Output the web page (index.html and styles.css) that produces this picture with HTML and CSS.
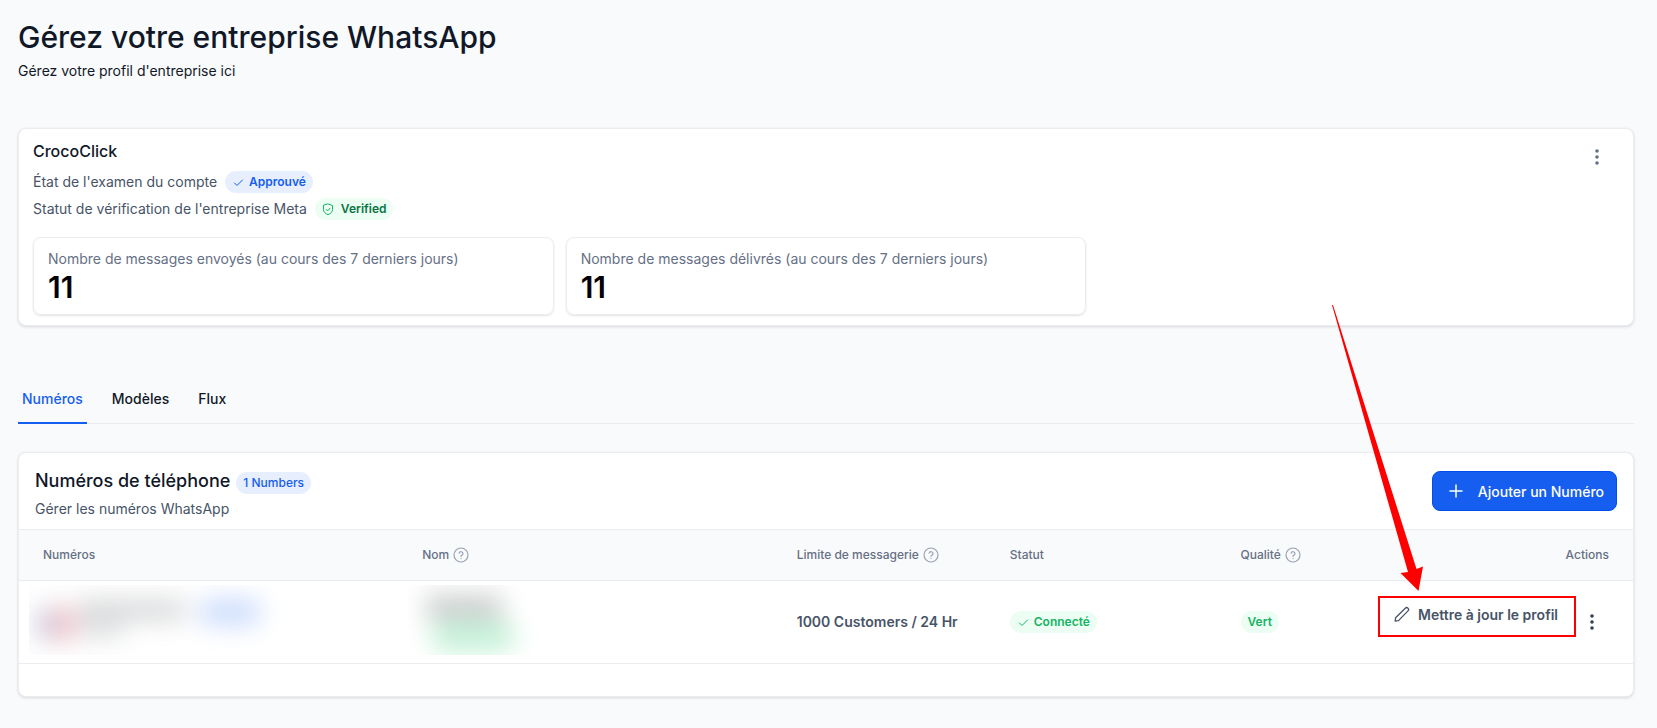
FILE: index.html
```html
<!DOCTYPE html>
<html lang="fr">
<head>
    <meta charset="UTF-8">
    <meta name="viewport" content="width=device-width, initial-scale=1">
    <title>Gérez votre entreprise WhatsApp</title>
    <link rel="stylesheet" href="styles.css">
</head>
<body>
<!-- Shared icons -->
<svg class="icon-defs" aria-hidden="true">
    <symbol id="icon-check" viewBox="0 0 12 12">
        <path d="M2.500 7 5 9.500 10.500 4"/>
    </symbol>
    <symbol id="icon-help" viewBox="0 0 16 16">
        <circle cx="8" cy="8" r="7"/>
        <path d="M6.1 6.1a2 2 0 0 1 3.9.6c0 1.3-2 1.6-2 2.6M8 11.4v.1"/>
    </symbol>
    <symbol id="icon-dots" viewBox="0 0 20 20">
        <circle cx="10" cy="4" r="1.800"/>
        <circle cx="10" cy="10" r="1.800"/>
        <circle cx="10" cy="16" r="1.800"/>
    </symbol>
</svg>

<main class="page">
    <header class="page-header">
        <h1 class="page-title">Gérez votre entreprise WhatsApp</h1>
        <p class="page-subtitle">Gérez votre profil d'entreprise ici</p>
    </header>

    <!-- Account card -->
    <section class="card account-card">
        <div class="account-top">
            <div class="account-info">
                <h2 class="account-name">CrocoClick</h2>
                <p class="account-line">État de l'examen du compte
                    <span class="badge badge-blue"><svg class="icon-check"><use href="#icon-check"/></svg>Approuvé</span>
                </p>
                <p class="account-line">Statut de vérification de l'entreprise Meta
                    <span class="badge badge-verified"><svg class="icon-shield" viewBox="0 0 12 14"><path d="M6 2 10.500 3.500v4c0 2.500-2 4.200-4.500 5.200C3.500 11.700 1.500 10 1.500 7.500v-4z"/><path d="m4.200 7.500 1.400 1.400 2.300-2.600"/></svg>Verified</span>
                </p>
            </div>
            <button class="icon-button" type="button" aria-label="Options du compte"><svg class="icon-dots"><use href="#icon-dots"/></svg></button>
        </div>
        <div class="stats">
            <div class="stat">
                <p class="stat-label">Nombre de messages envoyés (au cours des 7 derniers jours)</p>
                <p class="stat-value">11</p>
            </div>
            <div class="stat">
                <p class="stat-label">Nombre de messages délivrés (au cours des 7 derniers jours)</p>
                <p class="stat-value">11</p>
            </div>
        </div>
    </section>

    <!-- Tabs -->
    <nav class="tabs">
        <a class="tab active" href="#numeros">Numéros</a>
        <a class="tab" href="#modeles">Modèles</a>
        <a class="tab" href="#flux">Flux</a>
    </nav>

    <!-- Phone numbers card -->
    <section class="card" id="numeros">
        <div class="numbers-header">
            <div class="numbers-heading">
                <h2 class="numbers-title">Numéros de téléphone <span class="badge badge-blue badge-count">1 Numbers</span></h2>
                <p class="numbers-subtitle">Gérer les numéros WhatsApp</p>
            </div>
            <button class="add-button" type="button">
                <svg class="icon-plus" viewBox="0 0 14 14"><path d="M7 1v12M1 7h12"/></svg>
                Ajouter un Numéro
            </button>
        </div>
        <table class="numbers-table">
            <colgroup>
                <col class="col-number">
                <col class="col-name">
                <col class="col-limit">
                <col class="col-status">
                <col class="col-quality">
                <col class="col-actions">
            </colgroup>
            <thead>
                <tr>
                    <th>Numéros</th>
                    <th><span class="th-help">Nom <svg class="icon-help"><use href="#icon-help"/></svg></span></th>
                    <th><span class="th-help">Limite de messagerie <svg class="icon-help"><use href="#icon-help"/></svg></span></th>
                    <th>Statut</th>
                    <th><span class="th-help">Qualité <svg class="icon-help"><use href="#icon-help"/></svg></span></th>
                    <th class="th-actions">Actions</th>
                </tr>
            </thead>
            <tbody>
                <tr>
                    <td class="hidden-cell">
                        <div class="hidden-data">
                            <svg class="hidden-shapes" aria-hidden="true">
                                <rect x="8" y="23" width="16" height="32" fill="#b9bdd2"/>
                                <rect x="24" y="23" width="22" height="32" fill="#efb0ba"/>
                                <rect x="50" y="16" width="106" height="18" fill="#c4c6c8"/>
                                <rect x="50" y="38" width="44" height="14" fill="#cfd2d4"/>
                                <rect x="170" y="14" width="62" height="26" rx="12" fill="#bdd2fb"/>
                            </svg>
                        </div>
                    </td>
                    <td class="hidden-cell">
                        <div class="hidden-data">
                            <svg class="hidden-shapes" aria-hidden="true">
                                <rect x="18" y="11" width="76" height="22" fill="#b8babc"/>
                                <rect x="24" y="36" width="82" height="30" rx="12" fill="#b3edcb"/>
                            </svg>
                        </div>
                    </td>
                    <td class="limit">1000 Customers / 24 Hr</td>
                    <td><span class="badge badge-green"><svg class="icon-check"><use href="#icon-check"/></svg>Connecté</span></td>
                    <td><span class="badge badge-green">Vert</span></td>
                    <td class="td-actions">
                        <div class="actions">
                            <button class="profile-button" type="button">
                                <svg class="icon-pencil" viewBox="0 0 16 16"><path d="M1.200 15.200 1.600 11.800 11.300 2.200a1.900 1.900 0 0 1 2.700 2.700L4.500 14.600z"/></svg>
                                Mettre à jour le profil
                            </button>
                            <button class="icon-button icon-button-dark" type="button" aria-label="Options du numéro"><svg class="icon-dots"><use href="#icon-dots"/></svg></button>
                        </div>
                    </td>
                </tr>
            </tbody>
        </table>
    </section>

    <!-- Arrow pointing at the profile button -->
    <svg class="arrow" viewBox="0 0 92 286" aria-hidden="true">
        <path d="M0 0h1L84.500 264 91 261.500 86.500 286 68.500 268 76 267z"/>
    </svg>
</main>
</body>
</html>
```
FILE: styles.css
```css
/* Base */
* {
    box-sizing: border-box;
}

body {
    font-family: Inter, "Liberation Sans", sans-serif;
    font-size: 14px;
    line-height: 20px;
    color: #101828;
    background-color: #f9fafb;
    margin: 0;
}

h1, h2, p {
    margin: 0;
    font-weight: 500;
}

p {
    font-weight: 400;
}

button {
    font-family: inherit;
    cursor: pointer;
}

svg {
    fill: none;
    stroke: currentColor;
    stroke-linecap: round;
    stroke-linejoin: round;
    flex-shrink: 0;
}

.icon-defs {
    display: none;
}

.page {
    position: relative;
    padding: 18px 23px 30px 18px;
}

/* Page header */
.page-header {
    margin-bottom: 47px;
}

.page-title {
    font-size: 30px;
    line-height: 38px;
    margin-bottom: 5px;
}

/* Cards */
.card {
    background-color: #fff;
    border: 1px solid #eaecf0;
    border-radius: 8px;
    box-shadow: 0 1px 3px rgba(16, 24, 40, 0.15);
}

.account-card {
    padding: 10px 14px;
}

.account-top {
    display: flex;
    justify-content: space-between;
}

.account-name {
    font-size: 16px;
    line-height: 24px;
    margin-bottom: 8px;
}

.account-line {
    display: flex;
    align-items: center;
    gap: 8px;
    color: #475467;
    margin-bottom: 5px;
}

/* Badges */
.badge {
    display: inline-flex;
    align-items: center;
    gap: 5px;
    height: 22px;
    padding: 0 7px;
    border-radius: 11px;
    font-size: 12px;
    line-height: 18px;
    font-weight: 600;
}

.badge-blue {
    color: #155eef;
    background-color: #e7eefd;
}

.badge-count {
    margin-top: 3px;
    font-weight: 500;
}

.badge-verified {
    color: #087443;
    background-color: #ecfdf3;
    gap: 7px;
}

.badge-green {
    color: #16b364;
    background-color: #ecfdf3;
}

.icon-check {
    width: 12px;
    height: 12px;
}

.icon-shield {
    width: 12px;
    height: 14px;
    color: #16b364;
}

/* Icon buttons */
.icon-button {
    display: flex;
    align-items: center;
    justify-content: center;
    width: 32px;
    height: 32px;
    padding: 0;
    border: none;
    background: none;
    color: #667085;
}

.account-top .icon-button {
    margin: 2px 6px 0 0;
}

.icon-button-dark {
    color: #344054;
}

.icon-dots {
    width: 20px;
    height: 20px;
    fill: currentColor;
    stroke: none;
}

/* Stats */
.stats {
    display: grid;
    grid-template-columns: repeat(3, 1fr);
    gap: 12px;
    margin-top: 12px;
}

.stat {
    padding: 11px 14px 9px;
    border: 1px solid #eaecf0;
    border-radius: 8px;
    box-shadow: 0 1px 2px rgba(16, 24, 40, 0.12);
}

.stat-label {
    color: #667085;
}

.stat-value {
    font-size: 30px;
    line-height: 36px;
    font-weight: 600;
    color: #000;
}

/* Tabs */
.tabs {
    display: flex;
    gap: 21px;
    margin: 63px 0 28px;
    border-bottom: 1px solid #eaecf0;
}

.tab {
    padding: 0 4px 13px;
    margin-bottom: -1px;
    border-bottom: 2px solid transparent;
    color: #101828;
    font-weight: 500;
    text-decoration: none;
}

.tab.active {
    color: #155eef;
    border-color: #155eef;
}

/* Phone numbers header */
.numbers-header {
    display: flex;
    align-items: center;
    justify-content: space-between;
    padding: 12px 16px;
}

.numbers-heading {
    padding-top: 2px;
    margin-bottom: -2px;
}

.numbers-title {
    display: flex;
    align-items: center;
    gap: 6px;
    font-size: 18px;
    line-height: 28px;
    margin-bottom: 4px;
}

.numbers-subtitle {
    color: #475467;
}

.add-button {
    display: flex;
    align-items: center;
    gap: 15px;
    height: 40px;
    padding: 0 12px 0 16px;
    border: 1px solid #004eeb;
    border-radius: 8px;
    background-color: #155eef;
    color: #fff;
    font-size: 14px;
    font-weight: 500;
}

.icon-plus {
    width: 14px;
    height: 14px;
    stroke-width: 1.5;
}

/* Phone numbers table */
.numbers-table {
    width: 100%;
    margin-bottom: 32px;
    border-collapse: collapse;
    table-layout: fixed;
}

.col-number { width: 23.5%; }
.col-name { width: 23.2%; }
.col-limit { width: 13.2%; }
.col-status { width: 14.3%; }
.col-quality { width: 10%; }

.numbers-table th {
    height: 51px;
    padding: 0 24px;
    border-top: 1px solid #eaecf0;
    border-bottom: 1px solid #eaecf0;
    background-color: #f9fafb;
    color: #667085;
    font-size: 12px;
    font-weight: 500;
    text-align: left;
}

.numbers-table .th-actions {
    text-align: right;
}

.th-help {
    display: flex;
    align-items: center;
    gap: 4px;
}

.icon-help {
    width: 16px;
    height: 16px;
    color: #98a2b3;
    stroke-width: 1.2;
}

.numbers-table td {
    height: 83px;
    padding: 0 24px;
    border-bottom: 1px solid #eaecf0;
}

.numbers-table .limit {
    padding-right: 0;
    color: #475467;
    font-weight: 600;
    white-space: nowrap;
}

/* Blurred private data */
.numbers-table .hidden-cell {
    padding: 0 10px;
}

.hidden-data {
    height: 70px;
    margin-bottom: 4px;
    overflow: hidden;
}

.hidden-shapes {
    display: block;
    width: 100%;
    height: 70px;
    stroke: none;
    opacity: 0.8;
    filter: blur(13px);
}

/* Row actions */
.numbers-table .td-actions {
    padding: 0 25px 0 0;
}

.actions {
    display: flex;
    align-items: center;
    justify-content: flex-end;
}

.profile-button {
    display: flex;
    align-items: center;
    gap: 8px;
    height: 41px;
    margin-bottom: 12px;
    padding: 0 16px 4px 14px;
    border: 2px solid #f00;
    background: none;
    color: #475467;
    font-size: 14px;
    font-weight: 600;
    white-space: nowrap;
}

.icon-pencil {
    width: 16px;
    height: 16px;
    stroke-width: 1.3;
}

/* Arrow over the page */
.arrow {
    position: absolute;
    top: 305px;
    right: 233px;
    width: 92px;
    height: 286px;
    fill: #f00;
    stroke: none;
}
```
